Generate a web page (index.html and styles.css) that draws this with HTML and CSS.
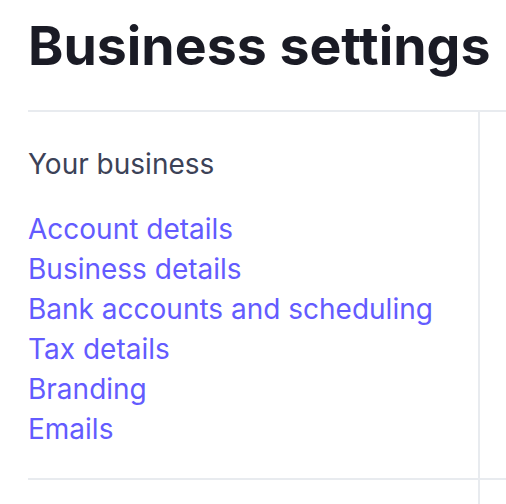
FILE: index.html
```html
<!DOCTYPE html>
<html>
    <head>
        <title>Business settings</title>
        <meta name="viewport" content="width=device-width, initial-scale=1.0">
        <link rel="stylesheet" href="styles.css">
    </head>
    <body>
        <h1 class="page-title">Business settings</h1>
        <div class="settings-grid">
            <section class="settings-group">
                <h2 class="group-title">Your business</h2>
                <ul class="group-links">
                    <li><a href="#">Account details</a></li>
                    <li><a href="#">Business details</a></li>
                    <li><a href="#">Bank accounts and scheduling</a></li>
                    <li><a href="#">Tax details</a></li>
                    <li><a href="#">Branding</a></li>
                    <li><a href="#">Emails</a></li>
                </ul>
            </section>
            <section class="settings-group side"></section>
            <section class="settings-group next"></section>
            <section class="settings-group side next"></section>
        </div>
    </body>
</html>
```
FILE: styles.css
```css
body {
    font-family: Inter, "Noto Sans", sans-serif;
    margin: 0;
    padding: 0 0 0 28px;
    background: #fff;
}

.page-title {
    margin: 0;
    padding-top: 12px;
    height: 110px;
    box-sizing: border-box;
    font-size: 53.6px;
    font-weight: 700;
    line-height: 68px;
    color: #1a1b25;
    white-space: nowrap;
}

.settings-grid {
    display: grid;
    grid-template-columns: 450px 1fr;
}

.settings-group {
    border-top: 2px solid #e8ebef;
    height: 368px;
    padding-top: 37px;
    box-sizing: border-box;
}

.settings-group.side {
    border-left: 2px solid #e8ebef;
}

.settings-group.next {
    height: 26px;
    padding-top: 0;
}

.group-title {
    margin: 0 0 30px;
    font-size: 28px;
    font-weight: 400;
    line-height: 30px;
    color: #3c4257;
    white-space: nowrap;
}

.group-links {
    list-style: none;
    margin: 0;
    padding: 0;
}

.group-links li {
    line-height: 40px;
    font-size: 28px;
    white-space: nowrap;
}

.group-links a {
    color: #635bff;
    text-decoration: none;
}
```
